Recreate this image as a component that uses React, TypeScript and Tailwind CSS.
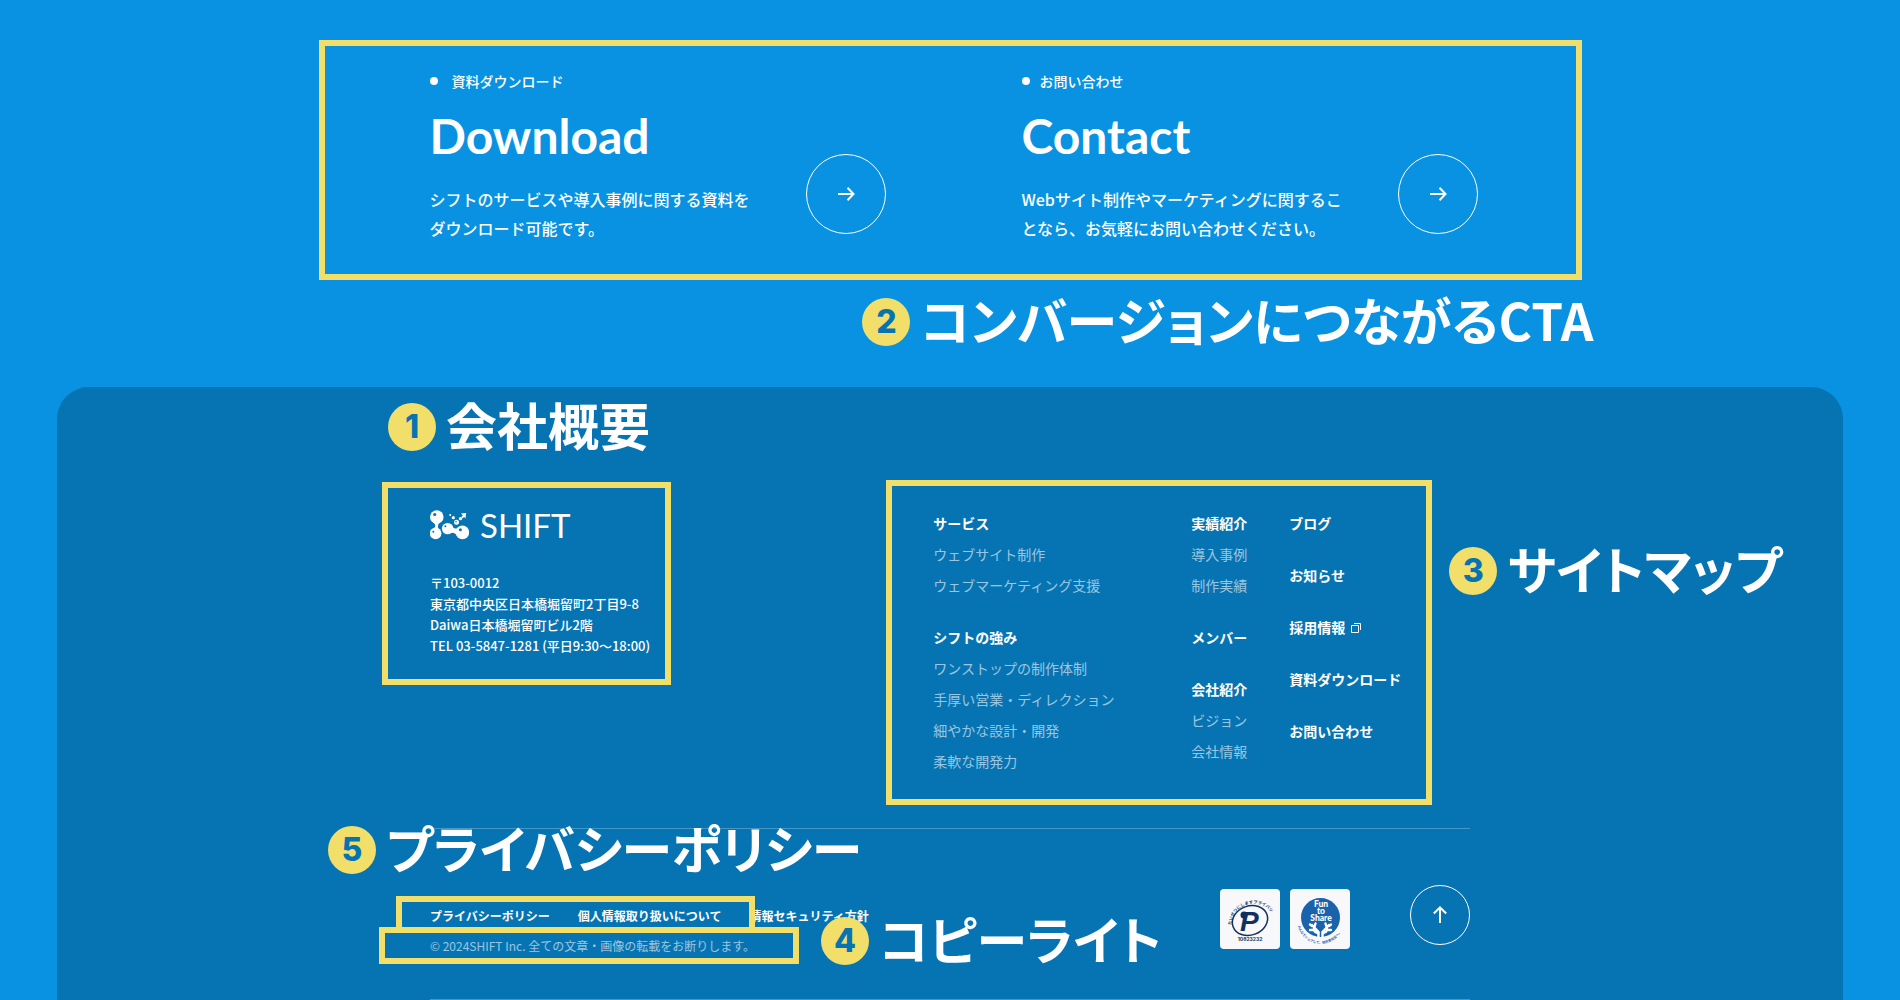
import clsx from "clsx";

type LinkGroup = {
  title: string;
  items?: string[];
  external?: boolean;
};

const sitemap: LinkGroup[][] = [
  [
    {
      title: "サービス",
      items: ["ウェブサイト制作", "ウェブマーケティング支援"],
    },
    {
      title: "シフトの強み",
      items: [
        "ワンストップの制作体制",
        "手厚い営業・ディレクション",
        "細やかな設計・開発",
        "柔軟な開発力",
      ],
    },
  ],
  [
    { title: "実績紹介", items: ["導入事例", "制作実績"] },
    { title: "メンバー" },
    { title: "会社紹介", items: ["ビジョン", "会社情報"] },
  ],
  [
    { title: "ブログ" },
    { title: "お知らせ" },
    { title: "採用情報", external: true },
    { title: "資料ダウンロード" },
    { title: "お問い合わせ" },
  ],
];

const policies = [
  "プライバシーポリシー",
  "個人情報取り扱いについて",
  "情報セキュリティ方針",
];

const Note: React.FC<{ number: number; text: string; className?: string }> = ({
  number,
  text,
  className,
}) => (
  <div className={clsx("flex h-12 items-start gap-[10px]", className)}>
    <span className="flex size-12 shrink-0 items-center justify-center rounded-full bg-[#f2df69] font-['Inter'] text-[32px] leading-none font-extrabold text-[#0674b3]">
      {number}
    </span>
    <span className="text-[51px] leading-[42px] font-bold whitespace-nowrap [font-feature-settings:'palt']">
      {text}
    </span>
  </div>
);

const ArrowIcon: React.FC<{ className?: string }> = ({ className }) => (
  <svg
    viewBox="0 0 18 18"
    className={clsx("size-[18px]", className)}
    fill="none"
    stroke="currentColor"
    strokeWidth="2"
  >
    <path d="M1 9h15M10.5 2.8 16.5 9l-6 6.2" />
  </svg>
);

const CtaCard: React.FC<{
  label: string;
  title: string;
  lines: string[];
  wide?: boolean;
}> = ({ label, title, lines, wide }) => (
  <a href="#" className="flex items-end justify-between">
    <span className="block">
      <span
        className={clsx(
          "flex items-center text-sm leading-6 font-medium",
          wide ? "gap-[14px]" : "gap-[10px]",
        )}
      >
        <span className="size-2 rounded-full bg-white" />
        {label}
      </span>
      <span className="mt-[18px] block font-['Lato'] text-5xl leading-[50px] font-bold">
        {title}
      </span>
      <span className="mt-6 block text-base leading-[29px] font-medium whitespace-nowrap">
        {lines.map((line) => (
          <span key={line} className="block">
            {line}
          </span>
        ))}
      </span>
    </span>
    <span className="mb-[9px] flex size-20 shrink-0 items-center justify-center rounded-full border border-white">
      <ArrowIcon />
    </span>
  </a>
);

const ShiftLogo = () => (
  <a href="#" className="flex h-[30px] items-center gap-[11px]">
    <svg viewBox="0 0 39 30" className="h-[30px] w-[39px]" fill="#fff">
      <circle cx="6.8" cy="7" r="6.8" />
      <circle cx="5.6" cy="23.4" r="5.8" />
      <path d="M3 12c3 3 3 4 0 8h6c-2-4-1-6 2-9z" />
      <circle cx="17.6" cy="18.6" r="5.7" />
      <circle cx="32.4" cy="22.4" r="6.8" />
      <path d="M21 14.500c2 4 4 5 7.500 3.200l-1.500 7.500c-2-2.500-5-3.200-8.500-1.600z" />
      <circle cx="26.500" cy="12.300" r="2.500" />
      <circle cx="23.300" cy="7.700" r="1.600" />
      <circle cx="20.200" cy="5" r="1" />
      <circle cx="30.400" cy="8.700" r="1.600" />
      <path d="M31 3.500 36.200 3l-.7 5.400-1.400-1.300-1.800 1.400-1.100-1.200 1.600-1.800z" />
      <g fill="#0674b3">
        <circle cx="4.700" cy="4.500" r="1.600" />
        <circle cx="3.300" cy="21.700" r="1" />
        <circle cx="15.400" cy="16.200" r="1" />
        <circle cx="30.400" cy="19.800" r="1.500" />
        <circle cx="26" cy="11.800" r=".8" />
      </g>
    </svg>
    <span className="font-['Lato'] text-[33px] leading-none font-normal">
      SHIFT
    </span>
  </a>
);

const PrivacyMark = () => (
  <svg viewBox="0 0 60 60" className="size-[60px] rounded bg-[#f8f8fb]">
    <defs>
      <path id="privacy-arc" d="M11.500 36A21.500 20 -20 0 1 52 25" />
    </defs>
    <text
      fill="#12305f"
      fontSize="4.200"
      fontWeight="700"
      fontFamily="Noto Sans CJK JP, sans-serif"
    >
      <textPath href="#privacy-arc">たいせつにしますプライバシー</textPath>
    </text>
    <ellipse
      cx="30"
      cy="31.500"
      rx="18"
      ry="14.500"
      transform="rotate(-20 30 31.500)"
      fill="none"
      stroke="#12305f"
      strokeWidth="1.500"
    />
    <text
      x="20"
      y="42"
      fill="#12305f"
      fontSize="28"
      fontWeight="700"
      fontStyle="italic"
      fontFamily="Liberation Sans, sans-serif"
    >
      P
    </text>
    <circle cx="24" cy="26" r="3.500" fill="#12305f" />
    <text
      x="30"
      y="52"
      textAnchor="middle"
      fill="#12305f"
      fontSize="5"
      fontWeight="700"
      fontFamily="Inter, sans-serif"
    >
      10823232
    </text>
  </svg>
);

const FunToShare = () => (
  <svg viewBox="0 0 60 60" className="size-[60px] rounded bg-[#f8f8fb]">
    <defs>
      <path id="share-arc" d="M7.500 36A23.500 23.500 0 0 0 53.500 36" />
    </defs>
    <circle cx="30.500" cy="28.500" r="19.500" fill="#1a62ab" />
    <g
      fill="#fff"
      fontSize="8.500"
      fontWeight="900"
      fontFamily="Lato, sans-serif"
      textAnchor="middle"
    >
      <text x="31" y="18">
        Fun
      </text>
      <text x="31" y="24.500">
        to
      </text>
      <text x="31" y="31.500">
        Share
      </text>
    </g>
    <g stroke="#fff" strokeLinecap="round" fill="none">
      <path
        d="M28.500 48V43L22 36M24 39.500 25.500 34.500M22 37l-2-1.500M24 41h-4M39 36l-6.500 7v5M37 39.500 35.500 34.500M39 37l2-1.500M37 41h4"
        strokeWidth="2.400"
      />
      <path d="M25 42.500 28 44M36 42.500 33 44" strokeWidth="3" />
    </g>
    <text
      fill="#1a62ab"
      fontSize="3.300"
      fontWeight="700"
      fontFamily="Noto Sans CJK JP, sans-serif"
    >
      <textPath href="#share-arc" startOffset="1">
        みんなでシェアして、低炭素社会へ。
      </textPath>
    </text>
  </svg>
);

const WindowIcon = () => (
  <svg
    viewBox="0 0 10 10"
    className="size-[10px]"
    fill="none"
    stroke="currentColor"
  >
    <path d="M.5 2.500h7v7h-7zM3 .5h6.500V7" />
  </svg>
);

export default function App() {
  return (
    <div className="flex min-h-screen flex-col overflow-x-hidden bg-[#0892e1] pt-10 font-['Noto_Sans_CJK_JP',sans-serif] text-white">
      <section className="mx-auto w-full max-w-[1263px]">
        <div className="grid grid-cols-2 gap-[136px] border-6 border-[#f2df69] pt-[23px] pr-[98px] pb-[31px] pl-[105px]">
          <CtaCard
            label="資料ダウンロード"
            title="Download"
            lines={[
              "シフトのサービスや導入事例に関する資料を",
              "ダウンロード可能です。",
            ]}
            wide
          />
          <CtaCard
            label="お問い合わせ"
            title="Contact"
            lines={[
              "Webサイト制作やマーケティングに関するこ",
              "となら、お気軽にお問い合わせください。",
            ]}
          />
        </div>
        <Note
          number={2}
          text="コンバージョンにつながるCTA"
          className="mt-[18px] -mr-3 justify-end"
        />
      </section>

      <footer className="mx-[3%] mt-[41px] flex-1 rounded-t-4xl bg-[#0674b3] pt-4">
        <div className="mx-auto w-full max-w-[1040px]">
          <Note number={1} text="会社概要" className="-ml-[42px]" />

          <div className="mt-[29px] -mr-[312px] -ml-12 flex items-start">
            <div className="mt-[2px] w-[289px] shrink-0 border-6 border-[#f2df69] pt-[22px] pb-[23px] pl-[42px]">
              <ShiftLogo />
              <address className="mt-8 text-[13px] leading-[21px] font-medium whitespace-nowrap not-italic">
                〒103-0012
                <br />
                東京都中央区日本橋堀留町2丁目9-8
                <br />
                Daiwa日本橋堀留町ビル2階
                <br />
                TEL 03-5847-1281 (平日9:30〜18:00)
              </address>
            </div>

            <nav className="ml-auto flex w-[546px] shrink-0 border-6 border-[#f2df69] pt-[25px] pb-[25px] pl-[41px] text-sm leading-[25px]">
              {sitemap.map((column, i) => (
                <div
                  key={i}
                  className={clsx(
                    "flex flex-col gap-[27px]",
                    i === 0 && "w-[258px]",
                    i === 1 && "w-[98px]",
                  )}
                >
                  {column.map((group) => (
                    <div key={group.title} className="flex flex-col gap-[6px]">
                      <a
                        href="#"
                        className="flex items-center gap-[6px] font-bold"
                      >
                        {group.title}
                        {group.external && <WindowIcon />}
                      </a>
                      {group.items?.map((item) => (
                        <a key={item} href="#" className="text-white/60">
                          {item}
                        </a>
                      ))}
                    </div>
                  ))}
                </div>
              ))}
            </nav>

            <Note
              number={3}
              text="サイトマップ"
              className="mt-[67px] ml-[17px]"
            />
          </div>

          <hr className="mt-[23px] border-white/25" />
          <Note
            number={5}
            text="プライバシーポリシー"
            className="-mt-[3px] -ml-[102px]"
          />

          <div className="relative mt-[11px] flex items-start">
            <div className="pt-5">
              <nav className="flex gap-[28px] text-xs leading-[22px] font-bold">
                {policies.map((policy) => (
                  <a key={policy} href="#">
                    {policy}
                  </a>
                ))}
              </nav>
              <p className="-ml-[51px] w-[420px] border-6 border-[#f2df69] pl-[45px] text-xs leading-[25px] text-white/60">
                © 2024SHIFT Inc. 全ての文章・画像の転載をお断りします。
              </p>
            </div>
            <div className="absolute top-[11px] -left-[34px] h-[37px] w-[359px] border-6 border-[#f2df69]" />
            <Note
              number={4}
              text="コピーライト"
              className="absolute top-8 left-[391px]"
            />
            <div className="mt-1 ml-auto flex gap-[10px]">
              <PrivacyMark />
              <FunToShare />
            </div>
            <a
              href="#"
              aria-label="Page top"
              className="ml-[60px] flex size-[60px] items-center justify-center rounded-full border border-white"
            >
              <ArrowIcon className="-rotate-90" />
            </a>
          </div>
          <hr className="mt-[35px] border-white/25" />
        </div>
      </footer>
    </div>
  );
}
